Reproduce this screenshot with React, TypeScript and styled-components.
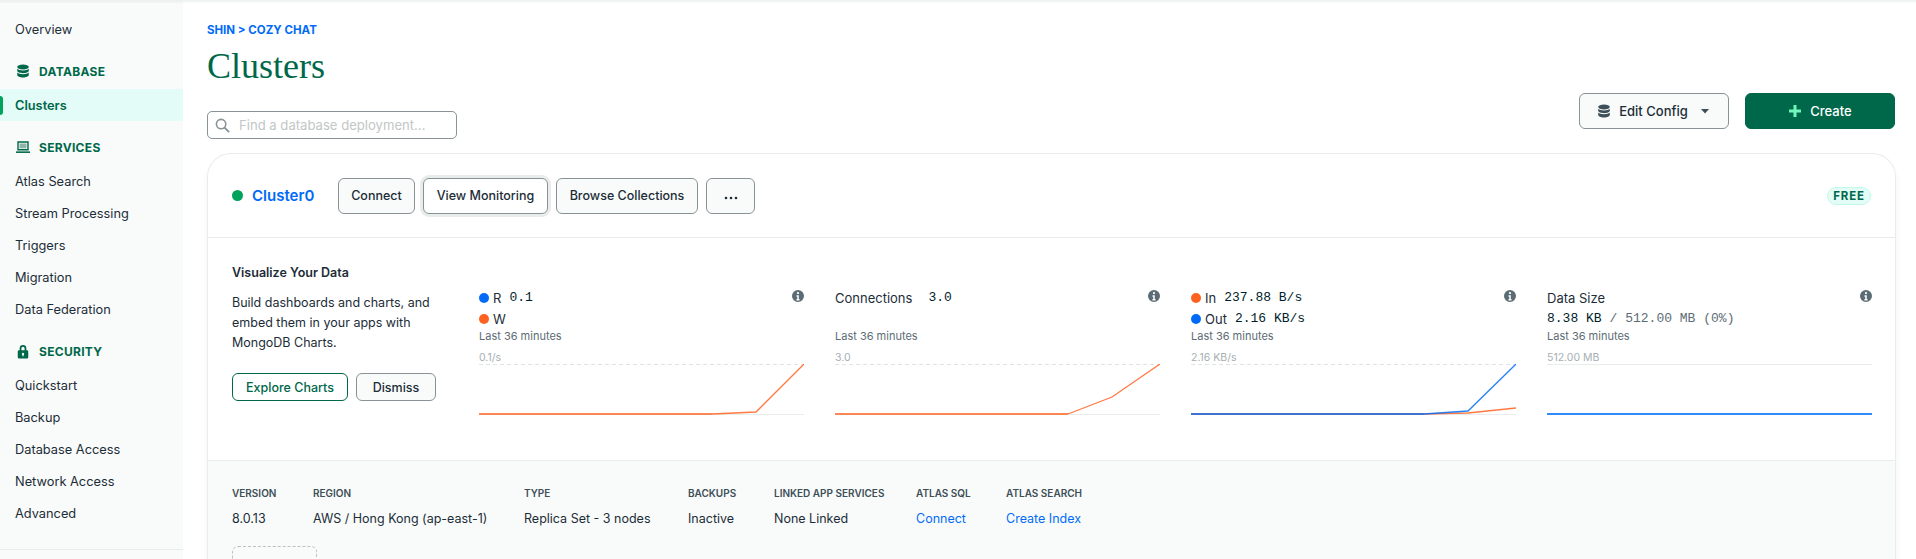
import React from "react";
import styled, { createGlobalStyle } from "styled-components";

const GlobalStyle = createGlobalStyle`
  html, body { margin: 0; padding: 0; background: #fff; }
  * { box-sizing: border-box; }
  body { font-family: Inter, "Liberation Sans", sans-serif; color: #1c2d38; }
`;

const Page = styled.div`
  position: relative;
  display: flex;
  width: 1916px;
  height: 559px;
  overflow: hidden;
  border-top: 1px solid #eef1f1;

  &::after {
    content: "";
    position: absolute;
    left: 0;
    right: 0;
    top: 0;
    height: 2px;
    background: rgba(0, 30, 43, 0.03);
  }
`;

const Sidebar = styled.nav`
  flex: 0 0 183px;
  background: #f9fbfa;
  padding-top: 12px;
  height: 558px;
  display: flex;
  flex-direction: column;
`;

const NavItem = styled.div<{ $active?: boolean }>`
  position: relative;
  flex: 0 0 32px;
  display: flex;
  align-items: center;
  padding-left: 15px;
  font-size: 12.8px;
  font-weight: ${(p) => (p.$active ? 600 : 400)};
  color: ${(p) => (p.$active ? "#00684a" : "#1c2d38")};
  background: ${(p) => (p.$active ? "#e3fcf7" : "transparent")};

  &::before {
    content: "";
    display: ${(p) => (p.$active ? "block" : "none")};
    position: absolute;
    left: 0;
    top: 7px;
    width: 3px;
    height: 19px;
    background: #00a35c;
    border-radius: 0 3px 3px 0;
  }
`;

const NavHeading = styled.div`
  flex: 0 0 32px;
  margin: 10px 0 2px;
  display: flex;
  align-items: center;
  gap: 9px;
  padding-left: 16px;
  font-size: 12px;
  font-weight: 700;
  letter-spacing: 0.3px;
  color: #00684a;
`;

const NavFoot = styled.div`
  margin-top: auto;
  height: 10px;
  border-top: 1px solid #e8edeb;
`;

const Main = styled.main`
  flex: 1;
  min-width: 0;
  padding: 21px 20px 0 24px;
`;

const Breadcrumb = styled.div`
  font-size: 11.5px;
  font-weight: 700;
  line-height: 16px;
  color: #016bf8;
`;

const Title = styled.h1`
  margin: 8px 0 0;
  font-family: "Liberation Serif", serif;
  font-size: 36px;
  font-weight: 400;
  line-height: 40px;
  color: #00684a;
`;

const Toolbar = styled.div`
  display: flex;
  align-items: flex-start;
  justify-content: space-between;
  height: 67px;
`;

const SearchBox = styled.div`
  margin-top: 25px;
  width: 250px;
  height: 28px;
  display: flex;
  align-items: center;
  gap: 9px;
  padding-left: 7px;
  border: 1px solid #889397;
  border-radius: 5px;
  font-size: 13.1px;
  color: #c1c7c6;
`;

const ToolbarActions = styled.div`
  display: flex;
  gap: 16px;
  margin-top: 7px;
  padding-right: 1px;
`;

const ActionButton = styled.button<{ $primary?: boolean }>`
  width: 150px;
  height: 36px;
  display: flex;
  align-items: center;
  justify-content: center;
  gap: 8px;
  border-radius: 6px;
  font-family: inherit;
  font-size: 13px;
  font-weight: 500;
  border: 1px solid ${(p) => (p.$primary ? "#00684a" : "#889397")};
  background: ${(p) => (p.$primary ? "#00684a" : "#f9fbfa")};
  color: ${(p) => (p.$primary ? "#fff" : "#1c2d38")};
`;

const Card = styled.section`
  border: 1px solid #e8edeb;
  border-bottom: none;
  border-radius: 24px 24px 0 0;
  box-shadow: 0 4px 10px -4px rgba(0, 30, 43, 0.15);
  overflow: hidden;
`;

const CardHeader = styled.div`
  height: 84px;
  display: flex;
  align-items: center;
  padding: 0 24px;
  border-bottom: 1px solid #e8edeb;
`;

const StatusDot = styled.span`
  width: 11px;
  height: 11px;
  border-radius: 50%;
  background: #00a35c;
  margin-right: 9px;
`;

const ClusterName = styled.a`
  width: 86px;
  font-size: 15px;
  font-weight: 600;
  color: #016bf8;
`;

const HeaderButtons = styled.div`
  display: flex;
  gap: 8px;
`;

const HeaderButton = styled.button<{ $width: number; $focus?: boolean }>`
  width: ${(p) => p.$width}px;
  height: 36px;
  border: 1px solid #889397;
  border-radius: 6px;
  font-family: inherit;
  font-size: 12.5px;
  font-weight: 500;
  padding: 0;
  color: #1c2d38;
  background: ${(p) => (p.$focus ? "#fff" : "#f9fbfa")};
  box-shadow: ${(p) => (p.$focus ? "0 0 0 3px #e8edeb" : "none")};
`;

const FreeBadge = styled.span`
  margin-left: auto;
  width: 44px;
  height: 18px;
  display: flex;
  align-items: center;
  justify-content: center;
  border: 1px solid #c0fae6;
  border-radius: 9px;
  background: #e3fcf7;
  color: #00684a;
  font-size: 11.5px;
  font-weight: 700;
  letter-spacing: 0.8px;
`;

const CardBody = styled.div`
  height: 222px;
  display: flex;
  padding: 0 20px 0 24px;
`;

const Promo = styled.div`
  flex: 0 0 247px;
  padding-top: 26px;
`;

const PromoTitle = styled.div`
  font-size: 12.5px;
  font-weight: 600;
  line-height: 18px;
  color: #1c2d38;
`;

const PromoText = styled.p`
  margin: 11px 0 0;
  font-size: 12.5px;
  line-height: 20px;
  color: #1c2d38;
  width: 215px;
`;

const PromoActions = styled.div`
  display: flex;
  gap: 8px;
  margin-top: 20px;
`;

const PromoButton = styled.button<{ $width: number; $green?: boolean }>`
  width: ${(p) => p.$width}px;
  height: 28px;
  padding: 0;
  border-radius: 6px;
  font-family: inherit;
  font-size: 12.5px;
  font-weight: 500;
  background: ${(p) => (p.$green ? "#fff" : "#f9fbfa")};
  color: ${(p) => (p.$green ? "#00684a" : "#1c2d38")};
  border: 1px solid ${(p) => (p.$green ? "#00684a" : "#889397")};
`;

const Charts = styled.div`
  flex: 1;
  display: grid;
  grid-template-columns: repeat(4, 325px);
  column-gap: 31px;
  padding-top: 49px;
`;

const ChartPanel = styled.div`
  display: flex;
  flex-direction: column;
`;

const LegendRows = styled.div`
  position: relative;
  height: 41px;
  display: flex;
  flex-direction: column;
`;

const LegendRow = styled.div`
  height: 21px;
  flex: 0 0 21px;
  display: flex;
  align-items: center;
  gap: 4px;
  font-size: 13px;
  color: #1c2d38;
`;

const Swatch = styled.span<{ $color: string }>`
  width: 10px;
  height: 10px;
  border-radius: 50%;
  background: ${(p) => p.$color};
`;

const Mono = styled.span<{ $muted?: boolean; $gap?: number }>`
  font-family: "Liberation Mono", monospace;
  font-size: 13px;
  margin-left: ${(p) => p.$gap ?? 4}px;
  color: ${(p) => (p.$muted ? "#5c6c75" : "#001e2b")};
`;

const InfoMark = styled.svg`
  position: absolute;
  right: 0;
  top: 3px;
`;

const Period = styled.div`
  font-size: 11px;
  line-height: 16px;
  color: #5c6c75;
`;

const AxisLabel = styled.div`
  margin-top: 7px;
  font-size: 10.5px;
  line-height: 13px;
  color: #a6afb3;
`;

const Plot = styled.svg`
  display: block;
`;

const CardFooter = styled.div`
  height: 110px;
  padding: 0 24px;
  border-top: 1px solid #e8edeb;
  background: #f9fbfa;
`;

const Facts = styled.div`
  display: flex;
  padding-top: 25px;
`;

const Fact = styled.div<{ $width: number }>`
  flex: 0 0 ${(p) => p.$width}px;
`;

const FactLabel = styled.div`
  font-size: 10px;
  font-weight: 600;
  line-height: 14px;
  color: #3d4f58;
`;

const FactValue = styled.div<{ $link?: boolean }>`
  margin-top: 11px;
  font-size: 12.5px;
  line-height: 16px;
  color: ${(p) => (p.$link ? "#016bf8" : "#1c2d38")};
`;

const DashedBox = styled.div`
  margin-top: 19px;
  width: 85px;
  height: 40px;
  border: 1px dashed #b8c4c2;
  border-radius: 6px;
`;

const DatabaseIcon = ({ color = "#00684a" }: { color?: string }) => (
  <svg width="14" height="14" viewBox="0 0 16 16" fill={color}>
    <ellipse cx="8" cy="3.4" rx="6.6" ry="2.8" />
    <path d="M1.4 5.4v2.4C1.4 9.3 4.4 10.5 8 10.5s6.6-1.2 6.6-2.7V5.4C13.4 6.6 10.9 7.3 8 7.3S2.6 6.6 1.4 5.4z" />
    <path d="M1.4 9.8v2.8C1.4 14.1 4.4 15.4 8 15.4s6.6-1.3 6.6-2.8V9.8c-1.2 1.2-3.7 1.9-6.6 1.9s-5.4-.7-6.6-1.9z" />
  </svg>
);

const LaptopIcon = () => (
  <svg width="14" height="14" viewBox="0 0 16 16">
    <path d="M1.5 1.5h13v10.5h-13V1.5zm1.6 1.6v7.3h9.8V3.1H3.1z" fill="#00684a" fillRule="evenodd" />
    <path d="M4 4h8v5.5H4z" fill="#8fb5a6" />
    <rect x="0" y="13" width="16" height="1.8" fill="#00684a" />
  </svg>
);

const LockIcon = () => (
  <svg width="14" height="15" viewBox="0 0 16 17" fill="#00684a">
    <path
      fillRule="evenodd"
      d="M4.2 7V4.8a3.8 3.8 0 0 1 7.6 0V7h.7A1.5 1.5 0 0 1 14 8.5v6.5a1.5 1.5 0 0 1-1.5 1.5h-9A1.5 1.5 0 0 1 2 15V8.5A1.5 1.5 0 0 1 3.5 7h.7zM6.2 4.8a1.8 1.8 0 1 1 3.6 0V7H6.2V4.8zM8 10a1.3 1.3 0 0 0-.7 2.4V14h1.4v-1.6A1.3 1.3 0 0 0 8 10z"
    />
  </svg>
);

const SearchIcon = () => (
  <svg width="15" height="15" viewBox="0 0 16 16" fill="none" stroke="#889397" strokeWidth="1.7">
    <circle cx="6.5" cy="6.5" r="5" />
    <path d="M10.2 10.2L15 15" strokeWidth="2" />
  </svg>
);

const InfoIcon = () => (
  <InfoMark width="12" height="12" viewBox="0 0 16 16" fill="#5c6c75">
    <path
      fillRule="evenodd"
      d="M8 16A8 8 0 1 0 8 0a8 8 0 0 0 0 16zM9.5 4a1.5 1.5 0 1 1-3 0 1.5 1.5 0 0 1 3 0zM6 7h3v5h1v2H6v-2h1V9H6V7z"
    />
  </InfoMark>
);

const BLUE = "#016bf8";
const ORANGE = "#ff6120";

type Series = { color: string; points: string };

const FLAT_END = 233;

const ChartPlot = ({ series }: { series: Series[] }) => (
  <Plot width="325" height="54" viewBox="0 0 325 54">
    <line x1="0" y1="0.5" x2="325" y2="0.5" stroke="#dfe3e3" strokeDasharray="4 3" />
    <line x1="0" y1="50.5" x2="325" y2="50.5" stroke="#e8edeb" />
    {series.map((s) => (
      <g key={s.points}>
        <line x1="0" y1="50" x2={FLAT_END} y2="50" stroke={s.color} strokeOpacity="0.75" strokeWidth="2" />
        <polyline points={s.points} fill="none" stroke={s.color} strokeOpacity="0.85" strokeWidth="1.3" />
      </g>
    ))}
  </Plot>
);

const NAV_GROUPS = [
  { title: "SERVICES", icon: <LaptopIcon />, items: ["Atlas Search", "Stream Processing", "Triggers", "Migration", "Data Federation"] },
  { title: "SECURITY", icon: <LockIcon />, items: ["Quickstart", "Backup", "Database Access", "Network Access", "Advanced"] },
];

const FACTS = [
  { label: "VERSION", value: "8.0.13", width: 81 },
  { label: "REGION", value: "AWS / Hong Kong (ap-east-1)", width: 211 },
  { label: "TYPE", value: "Replica Set - 3 nodes", width: 164 },
  { label: "BACKUPS", value: "Inactive", width: 86 },
  { label: "LINKED APP SERVICES", value: "None Linked", width: 142 },
  { label: "ATLAS SQL", value: "Connect", width: 90, link: true },
  { label: "ATLAS SEARCH", value: "Create Index", width: 120, link: true },
];

export default function App() {
  return (
    <>
      <GlobalStyle />
      <Page>
        <Sidebar>
          <NavItem>Overview</NavItem>
          <NavHeading>
            <DatabaseIcon />
            DATABASE
          </NavHeading>
          <NavItem $active>Clusters</NavItem>
          {NAV_GROUPS.map((group) => (
            <React.Fragment key={group.title}>
              <NavHeading>
                {group.icon}
                {group.title}
              </NavHeading>
              {group.items.map((item) => (
                <NavItem key={item}>{item}</NavItem>
              ))}
            </React.Fragment>
          ))}
          <NavFoot />
        </Sidebar>
        <Main>
          <Breadcrumb>SHIN &gt; COZY CHAT</Breadcrumb>
          <Title>Clusters</Title>
          <Toolbar>
            <SearchBox>
              <SearchIcon />
              Find a database deployment...
            </SearchBox>
            <ToolbarActions>
              <ActionButton>
                <DatabaseIcon color="#3d4f58" />
                Edit Config
                <svg width="12" height="12" viewBox="0 0 12 12" fill="#3d4f58" style={{ marginLeft: 3 }}>
                  <path d="M2 4h8L6 8.5z" />
                </svg>
              </ActionButton>
              <ActionButton $primary>
                <svg width="14" height="14" viewBox="0 0 14 14" fill="#71f6ba">
                  <path d="M5.5 1h3v4.5H13v3H8.5V13h-3V8.5H1v-3h4.5z" />
                </svg>
                Create
              </ActionButton>
            </ToolbarActions>
          </Toolbar>
          <Card>
            <CardHeader>
              <StatusDot />
              <ClusterName>Cluster0</ClusterName>
              <HeaderButtons>
                <HeaderButton $width={77}>Connect</HeaderButton>
                <HeaderButton $width={125} $focus>View Monitoring</HeaderButton>
                <HeaderButton $width={142}>Browse Collections</HeaderButton>
                <HeaderButton $width={49}>
                  <svg width="14" height="4" viewBox="0 0 14 4" fill="#1c2d38">
                    <circle cx="2" cy="2" r="1.3" />
                    <circle cx="7" cy="2" r="1.3" />
                    <circle cx="12" cy="2" r="1.3" />
                  </svg>
                </HeaderButton>
              </HeaderButtons>
              <FreeBadge>FREE</FreeBadge>
            </CardHeader>
            <CardBody>
              <Promo>
                <PromoTitle>Visualize Your Data</PromoTitle>
                <PromoText>Build dashboards and charts, and embed them in your apps with MongoDB Charts.</PromoText>
                <PromoActions>
                  <PromoButton $width={116} $green>Explore Charts</PromoButton>
                  <PromoButton $width={80}>Dismiss</PromoButton>
                </PromoActions>
              </Promo>
              <Charts>
                <ChartPanel>
                  <LegendRows>
                    <LegendRow><Swatch $color={BLUE} />R <Mono>0.1</Mono></LegendRow>
                    <LegendRow><Swatch $color={ORANGE} />W</LegendRow>
                    <InfoIcon />
                  </LegendRows>
                  <Period>Last 36 minutes</Period>
                  <AxisLabel>0.1/s</AxisLabel>
                  <ChartPlot series={[{ color: ORANGE, points: "233,50 277,48 325,0" }]} />
                </ChartPanel>
                <ChartPanel>
                  <LegendRows>
                    <LegendRow>Connections <Mono $gap={12}>3.0</Mono></LegendRow>
                    <InfoIcon />
                  </LegendRows>
                  <Period>Last 36 minutes</Period>
                  <AxisLabel>3.0</AxisLabel>
                  <ChartPlot series={[{ color: ORANGE, points: "233,50 277,33 325,0" }]} />
                </ChartPanel>
                <ChartPanel>
                  <LegendRows>
                    <LegendRow><Swatch $color={ORANGE} />In <Mono>237.88 B/s</Mono></LegendRow>
                    <LegendRow><Swatch $color={BLUE} />Out <Mono>2.16 KB/s</Mono></LegendRow>
                    <InfoIcon />
                  </LegendRows>
                  <Period>Last 36 minutes</Period>
                  <AxisLabel>2.16 KB/s</AxisLabel>
                  <ChartPlot
                    series={[
                      { color: ORANGE, points: "233,50 277,49 325,44" },
                      { color: BLUE, points: "233,50 277,47 325,0" },
                    ]}
                  />
                </ChartPanel>
                <ChartPanel>
                  <LegendRows>
                    <LegendRow>Data Size</LegendRow>
                    <LegendRow>
                      <Mono $gap={0}>8.38 KB</Mono>
                      <Mono $muted $gap={4}>/ 512.00 MB (0%)</Mono>
                    </LegendRow>
                    <InfoIcon />
                  </LegendRows>
                  <Period>Last 36 minutes</Period>
                  <AxisLabel>512.00 MB</AxisLabel>
                  <Plot width="325" height="54" viewBox="0 0 325 54">
                    <line x1="0" y1="0.5" x2="325" y2="0.5" stroke="#e8edeb" />
                    <line x1="0" y1="50" x2="325" y2="50" stroke={BLUE} strokeOpacity="0.8" strokeWidth="2" />
                  </Plot>
                </ChartPanel>
              </Charts>
            </CardBody>
            <CardFooter>
              <Facts>
                {FACTS.map((fact) => (
                  <Fact key={fact.label} $width={fact.width}>
                    <FactLabel>{fact.label}</FactLabel>
                    <FactValue $link={fact.link}>{fact.value}</FactValue>
                  </Fact>
                ))}
              </Facts>
              <DashedBox />
            </CardFooter>
          </Card>
        </Main>
      </Page>
    </>
  );
}
